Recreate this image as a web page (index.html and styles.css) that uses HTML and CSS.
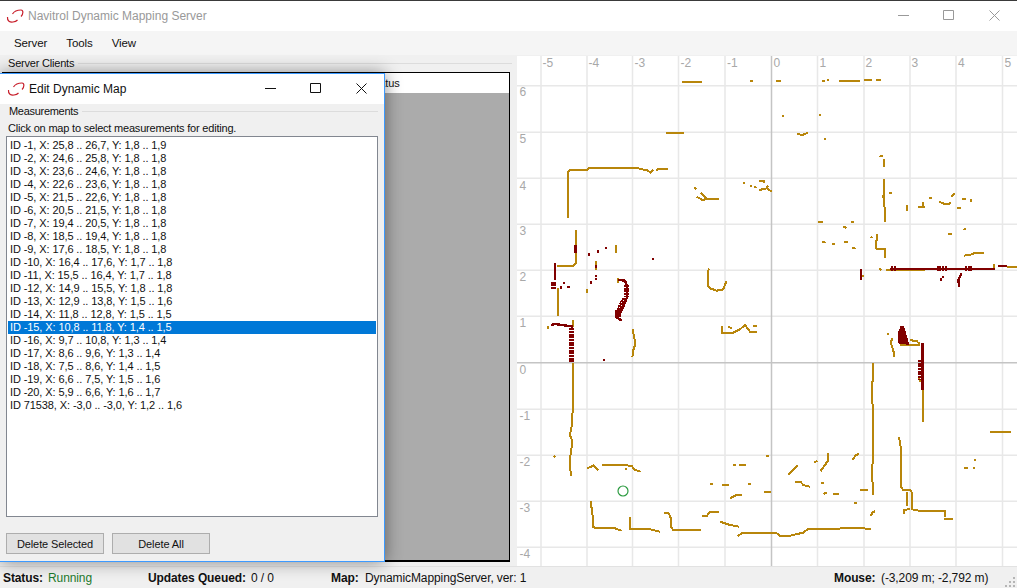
FILE: index.html
```html
<!DOCTYPE html>
<html lang="en">
<head>
    <meta charset="UTF-8">
    <title>Navitrol Dynamic Mapping Server</title>
    <link rel="stylesheet" href="styles.css">
</head>
<body>
    <div class="app">
        <div class="titlebar">
            <svg class="logo" width="18" height="16" viewBox="0 0 18 16"><path d="M6.500 6C8 3.500 11 2 15 2C17.500 2 17.500 6 15 8.500M1.500 9C1 13 4 14.500 7 14C9 13.700 10.500 13 11.500 12"/></svg>
            <span class="title">Navitrol Dynamic Mapping Server</span>
            <svg class="controls" width="102" height="12" viewBox="0 0 102 12"><path d="M0 5.500H11M45.500 .500H55.500V9.500H45.500ZM91.500 .500L101.500 10.500M101.500 .500L91.500 10.500"/></svg>
        </div>
        <div class="menubar">
            <span>Server</span>
            <span>Tools</span>
            <span>View</span>
        </div>
        <div class="main">
            <div class="clients">
                <div class="group-title"><span>Server Clients</span></div>
                <div class="grid">
                    <div class="grid-head"><span>Status</span></div>
                </div>
            </div>
            <div class="map">
                <svg width="500" height="510" viewBox="517 56 500 510">
                    <g class="gridlines">
                        <path d="M541 56V566M587 56V566M632.500 56V566M678.500 56V566M725 56V566M817.500 56V566M864 56V566M910 56V566M956 56V566M1002.500 56V566"/>
                        <path d="M517 85.700H1017M517 132.300H1017M517 178.300H1017M517 224.300H1017M517 270.300H1017M517 316.300H1017M517 409.300H1017M517 455.300H1017M517 501.300H1017M517 547.300H1017"/>
                    </g>
                    <path class="axis" d="M771.500 56V566M517 362.700H1017"/>
                    <g class="labels">
                        <text x="542.500" y="67">-5</text><text x="588.500" y="67">-4</text><text x="634.500" y="67">-3</text><text x="680.500" y="67">-2</text><text x="727" y="67">-1</text><text x="773.500" y="67">0</text><text x="819.500" y="67">1</text><text x="865.500" y="67">2</text><text x="911.500" y="67">3</text><text x="958" y="67">4</text><text x="1004.500" y="67">5</text>
                        <text x="519.500" y="96">6</text><text x="519.500" y="143">5</text><text x="519.500" y="189.500">4</text><text x="519.500" y="235">3</text><text x="519.500" y="281">2</text><text x="519.500" y="327">1</text><text x="519.500" y="374">0</text><text x="519.500" y="420">-1</text><text x="519.500" y="466">-2</text><text x="519.500" y="512">-3</text><text x="519.500" y="558">-4</text>
                    </g>
                    <!-- upper half of the scan, traced at 3x -->
                    <g transform="translate(510 50) scale(0.33333)">
                        <path class="wall" d="M517 95H575M720 93H729M798 93H812M937 94H945M951 89H957M988 92H1050M1062 89H1086M1098 90H1112M468 248H522M862 252L878 255L893 248M815 197H822M927 194H933M942 267H948M1108 320L1118 317M1121 327V350M1121 387V470M1118 435V445M1125 470V515M1137 430H1145M174 505V365L180 360H232L236 353H380L395 358L410 360L422 368L430 360M438 360L450 356H474M553 413L559 418M572 428L590 447H627M560 440L578 450L590 447M698 398H705M720 407H727M733 408L738 414M748 393H763V400M748 420L770 415L786 425M770 408L775 413M1192 466V482M1225 470H1245M1240 455V475M1258 443H1266M1288 456L1305 462H1318L1322 458M1325 440L1333 430M1342 473H1352M1355 446H1367M1383 448V455M1314 551H1326M1360 540L1367 535M925 515H940M1024 517H1031M1000 530L1010 534M937 575L947 578M966 581H974M1003 575H1013M1027 593L1037 596M1082 560L1088 564M1102 552V570L1097 575V595L1110 598H1125M1125 595V623M1363 617L1385 613L1395 608H1422M1108 656L1114 660M1128 660H1245M1452 642V655M1490 650H1521M1056 678H1061M197 540V640L190 648H140M143 715V799M318 585V610M258 632V660M230 718V728M597 656L593 668V705L600 715L620 722L640 718L645 705L650 692M323 685V700"/>
                        <path class="scan" d="M1140 657H1455M1465 648H1490M1053 658V690M1355 670L1345 690L1348 712M1295 681H1301M1290 689H1296M197 585V610M135 640V690M234 614H240M260 605H267M284 594H291M426 627H432M159 700H165M150 713H156M172 711H179M240 698H246M254 678H260M256 688H262M255 650H262M325 690L345 692L352 710V740L340 770L330 790L322 800"/>
                        <path class="scan-thick" d="M131 695V718M1144 657H1160M1280 655H1310M1365 655H1385M350 705V740M343 745L330 775L325 800"/>
                    </g>
                    <!-- lower half -->
                    <g transform="translate(510 310) scale(0.33333)">
                        <path class="wall" d="M144 0V15M115 58V48M190 30V50M190 160V290L187 315V340L183 358L180 375L187 395L183 425L180 445V470L183 497M130 438L136 441M368 58L375 95V105L370 120L367 142M637 47V70H665L690 58L705 45L720 65H740M655 50L665 55M730 47H740M1133 68V75M1148 85L1142 95L1152 130V140M1170 105H1228V97M1200 90L1225 95M1238 240V332L1243 335M1227 200L1230 215M1088 158V210L1085 240L1088 290V380L1090 420L1087 470L1088 555M1050 540H1075M1167 380L1172 410V530L1180 540H1200L1207 550V598L1225 602H1305V620M1190 545V588M1182 612V600L1200 597M1303 628H1328M1440 366H1503M1392 450H1399M1363 474H1373M1388 475H1395M232 475L250 467L265 480M277 465H345L365 468L375 480L392 485M346 478H352M668 465H678M688 466H708M769 437H777M600 522H610M637 525H657M715 522H722M660 565L680 555H695M762 546H782M835 495L850 480L862 466M856 516H872L880 525L900 530M913 457L922 452M932 483L945 465L955 450V428M1028 450L1035 438L1047 430M933 518H941M940 552L950 548M970 553H987M1033 578H1040M1083 618L1087 607L1095 604M242 572L248 620V650L260 655H315L335 662M360 620V658H420L450 665M463 608H475L483 625V650L490 660H572M577 618H590L600 605H628M630 635L660 645L687 650M683 678L695 670H800L810 677H840L880 668L895 656H975L1005 655H1060L1082 657"/>
                        <path class="scan" d="M122 45L135 42L190 50M279 150H285M1238 100V240M320 0V22L335 32"/>
                        <path class="scan-thick" d="M184 55V160M327 0V24M1233 150V210"/>
                        <path class="scan-fill" d="M1172 48L1182 48L1198 105L1165 100L1165 65Z"/>
                        <circle class="robot" cx="339" cy="543" r="15"/>
                    </g>
                </svg>
            </div>
        </div>
        <div class="statusbar">
            <b class="s-status">Status:</b><span class="running">Running</span>
            <b class="s-queue">Updates Queued:</b><span class="s-count">0 / 0</span>
            <b class="s-map">Map:</b><span class="s-name">DynamicMappingServer, ver: 1</span>
            <b class="s-mouse">Mouse:</b><span class="s-pos">(-3,209 m; -2,792 m)</span>
            <svg class="grip" width="12" height="12" viewBox="0 0 12 12"><path d="M9 2h2v2H9zM5 6h2v2H5zM9 6h2v2H9zM1 10h2v2H1zM5 10h2v2H5zM9 10h2v2H9z"/></svg>
        </div>

        <div class="dialog">
            <div class="dialog-title">
                <svg class="logo" width="18" height="16" viewBox="0 0 18 16"><path d="M6.500 6C8 3.500 11 2 15 2C17.500 2 17.500 6 15 8.500M1.500 9C1 13 4 14.500 7 14C9 13.700 10.500 13 11.500 12"/></svg>
                <span class="dialog-name">Edit Dynamic Map</span>
                <svg class="dialog-controls" width="102" height="12" viewBox="0 0 102 12"><path d="M0 5.500H11M45.500 .500H55.500V9.500H45.500ZM91.500 .500L101.500 10.500M101.500 .500L91.500 10.500"/></svg>
            </div>
            <div class="dialog-body">
                <div class="group-title measure"><span>Measurements</span></div>
                <div class="hint">Click on map to select measurements for editing.</div>
                <div class="list">
                    <div>ID -1, X: 25,8 .. 26,7, Y: 1,8 .. 1,9</div>
                    <div>ID -2, X: 24,6 .. 25,8, Y: 1,8 .. 1,8</div>
                    <div>ID -3, X: 23,6 .. 24,6, Y: 1,8 .. 1,8</div>
                    <div>ID -4, X: 22,6 .. 23,6, Y: 1,8 .. 1,8</div>
                    <div>ID -5, X: 21,5 .. 22,6, Y: 1,8 .. 1,8</div>
                    <div>ID -6, X: 20,5 .. 21,5, Y: 1,8 .. 1,8</div>
                    <div>ID -7, X: 19,4 .. 20,5, Y: 1,8 .. 1,8</div>
                    <div>ID -8, X: 18,5 .. 19,4, Y: 1,8 .. 1,8</div>
                    <div>ID -9, X: 17,6 .. 18,5, Y: 1,8 .. 1,8</div>
                    <div>ID -10, X: 16,4 .. 17,6, Y: 1,7 .. 1,8</div>
                    <div>ID -11, X: 15,5 .. 16,4, Y: 1,7 .. 1,8</div>
                    <div>ID -12, X: 14,9 .. 15,5, Y: 1,8 .. 1,8</div>
                    <div>ID -13, X: 12,9 .. 13,8, Y: 1,5 .. 1,6</div>
                    <div>ID -14, X: 11,8 .. 12,8, Y: 1,5 .. 1,5</div>
                    <div class="selected">ID -15, X: 10,8 .. 11,8, Y: 1,4 .. 1,5</div>
                    <div>ID -16, X: 9,7 .. 10,8, Y: 1,3 .. 1,4</div>
                    <div>ID -17, X: 8,6 .. 9,6, Y: 1,3 .. 1,4</div>
                    <div>ID -18, X: 7,5 .. 8,6, Y: 1,4 .. 1,5</div>
                    <div>ID -19, X: 6,6 .. 7,5, Y: 1,5 .. 1,6</div>
                    <div>ID -20, X: 5,9 .. 6,6, Y: 1,6 .. 1,7</div>
                    <div>ID 71538, X: -3,0 .. -3,0, Y: 1,2 .. 1,6</div>
                </div>
                <div class="buttons">
                    <button>Delete Selected</button>
                    <button>Delete All</button>
                </div>
            </div>
        </div>
    </div>
</body>
</html>
```

FILE: styles.css
```css
* {
    margin: 0;
    padding: 0;
    box-sizing: border-box;
}

body {
    font-family: "Liberation Sans", Arial, sans-serif;
    font-size: 11px;
    letter-spacing: -0.1px;
    color: #111;
    background: #f0f0f0;
    overflow: hidden;
}

.app {
    position: relative;
    width: 1017px;
    height: 588px;
    display: flex;
    flex-direction: column;
    overflow: hidden;
}

.logo {
    flex: none;
    fill: none;
    stroke: #c8202c;
    stroke-width: 1.2;
}

.titlebar {
    height: 31px;
    display: flex;
    align-items: center;
    padding-left: 6px;
    background: #fff;
    border-top: 1px solid #3a3a3a;
}

.title {
    margin-left: 4px;
    font-size: 12px;
    letter-spacing: 0;
    color: #999;
}

.controls {
    margin-left: auto;
    margin-right: 17px;
    fill: none;
    stroke: #999;
}

.menubar {
    height: 24px;
    display: flex;
    align-items: center;
    gap: 19px;
    padding-left: 14px;
    font-size: 11.500px;
    background: #f5f5f5;
}

.main {
    flex: 1;
    display: flex;
    min-height: 0;
}

.clients {
    width: 517px;
    padding: 1px 5px 0 2px;
    display: flex;
    flex-direction: column;
}

.group-title {
    display: flex;
    align-items: center;
    height: 15px;
    padding-left: 6px;
    line-height: 15px;
    letter-spacing: -0.2px;
}

.group-title::after {
    content: "";
    flex: 1;
    height: 1px;
    margin-left: 4px;
    background: #dcdcdc;
}

.grid {
    flex: 1;
    margin-bottom: 4px;
    border: 1px solid #000;
    border-bottom-width: 2px;
    background: #ababab;
    margin-right: 2px;
    margin-top: 1px;
}

.grid-head {
    height: 20px;
    line-height: 20px;
    background: #fff;
    padding-left: 366px;
}

.map {
    flex: 1;
    margin-top: 1px;
    background: #fff;
    min-width: 0;
}

.map svg {
    display: block;
}

.gridlines path {
    fill: none;
    stroke: #e8e8e8;
    stroke-width: 1.5;
}

.axis {
    fill: none;
    stroke: #c4c4c4;
    stroke-width: 1.5;
}

.labels text {
    font-size: 12px;
    letter-spacing: 0;
    fill: #a8a8a8;
}

.wall,
.scan,
.scan-thick,
.scan-fill {
    shape-rendering: crispEdges;
}

.wall,
.scan,
.scan-thick {
    fill: none;
}

.wall {
    stroke: #b8860b;
    stroke-width: 6;
}

.scan {
    stroke: #800000;
    stroke-width: 7;
}

.scan-thick {
    stroke: #800000;
    stroke-width: 15;
    stroke-dasharray: 6 2;
}

.scan-fill {
    fill: #800000;
}

.robot {
    fill: none;
    stroke: #2a9a3f;
    stroke-width: 3.500;
}

.statusbar {
    height: 22px;
    display: flex;
    align-items: center;
    position: relative;
    font-size: 12px;
    background: #f0f0f0;
    border-top: 1px solid #e2e2e2;
}

.s-status {
    width: 45px;
    margin-left: 3px;
}

.running {
    width: 100px;
    color: #1c7a2c;
}

.s-queue {
    width: 103px;
}

.s-count {
    width: 80px;
}

.s-map {
    width: 34px;
}

.s-name {
    flex: 1;
}

.s-mouse {
    width: 47px;
}

.s-pos {
    width: 136px;
}

.grip {
    position: absolute;
    right: 1px;
    bottom: 1px;
    fill: #b5b5b5;
}

/* floating window over the clients grid */
.dialog {
    position: absolute;
    left: 0;
    top: 73px;
    width: 385px;
    height: 489px;
    display: flex;
    flex-direction: column;
    background: #f0f0f0;
    border: 1px solid #3c9aff;
    border-left: none;
    box-shadow: 0 0 16px rgba(0, 0, 0, 0.45);
}

.dialog-title {
    height: 30px;
    flex: none;
    display: flex;
    align-items: center;
    padding-left: 7px;
    background: #fff;
}

.dialog-name {
    margin-left: 4px;
    font-size: 12px;
    letter-spacing: 0;
    color: #111;
}

.dialog-controls {
    margin-left: auto;
    margin-right: 17px;
    fill: none;
    stroke: #111;
}

.dialog-body {
    flex: 1;
    display: flex;
    flex-direction: column;
    padding: 0 6px 7px;
    min-height: 0;
}

.measure {
    padding-left: 3px;
    letter-spacing: -0.3px;
}

.hint {
    margin: 2px 0 1px 2px;
    line-height: 14px;
    letter-spacing: -0.2px;
}

.list {
    flex: 1;
    background: #fff;
    border: 1px solid #828790;
    padding: 2px 1px 1px;
    line-height: 13px;
}

.list div {
    padding-left: 2px;
    height: 13px;
    white-space: nowrap;
}

.list .selected {
    background: #0078d7;
    color: #fff;
}

.buttons {
    display: flex;
    gap: 8px;
    margin-top: 16px;
}

button {
    width: 98px;
    height: 21px;
    font: inherit;
    letter-spacing: -0.1px;
    color: #111;
    background: #e1e1e1;
    border: 1px solid #adadad;
}
```
